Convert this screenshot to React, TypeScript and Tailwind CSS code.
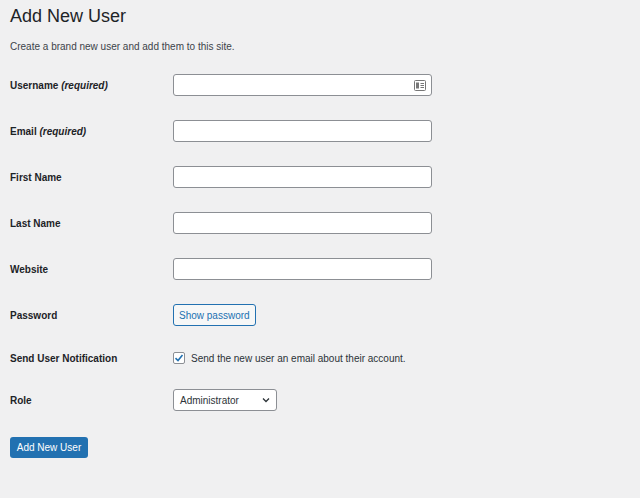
export default function App() {
  const font = { fontFamily: '"Liberation Sans", Arial, sans-serif' };
  const Input = ({ icon }: { icon?: boolean }) => (
    <div className="relative w-[259px] h-[22px] bg-white border border-[#8c8f94] rounded-[3px]">
      {icon && (
        <svg className="absolute right-[5px] top-[5px]" width="12" height="11" viewBox="0 0 12 11">
          <rect x="0.5" y="0.5" width="11" height="10" rx="1" fill="none" stroke="#777" />
          <rect x="2" y="2.5" width="3" height="6" fill="#777" />
          <rect x="6.5" y="3" width="3.5" height="1" fill="#777" />
          <rect x="6.5" y="5" width="3.5" height="1" fill="#777" />
          <rect x="6.5" y="7" width="3.5" height="1" fill="#777" />
        </svg>
      )}
    </div>
  );
  const Row = ({ label, req, h = "h-[46px]", children }: any) => (
    <div className={`flex items-center ${h}`}>
      <div className="w-[163px] text-[10px] font-bold text-[#1d2327]">
        {label}
        {req && <i> (required)</i>}
      </div>
      {children}
    </div>
  );
  return (
    <div className="w-[640px] h-[498px] bg-[#f0f0f1] px-[10px] text-[#1d2327]" style={font}>
      <div className="pt-[5px] text-[18px] leading-[22px]">Add New User</div>
      <div className="mt-[13px] text-[10px] leading-[14px] text-[#3c434a]">Create a brand new user and add them to this site.</div>
      <div className="mt-[8px]">
        <Row label="Username" req><Input icon /></Row>
        <Row label="Email" req><Input /></Row>
        <Row label="First Name"><Input /></Row>
        <Row label="Last Name"><Input /></Row>
        <Row label="Website"><Input /></Row>
        <Row label="Password">
          <div className="h-[22px] px-[5px] flex items-center border border-[#2271b1] rounded-[3px] bg-[#f6f7f7] text-[#2271b1] text-[10px]">Show password</div>
        </Row>
        <Row label="Send User Notification" h="h-[40px]">
          <div className="flex items-center gap-[6px] text-[10px] text-[#2c3338]">
            <div className="w-[12px] h-[12px] bg-white border border-[#8c8f94] rounded-[2px] flex items-center justify-center">
              <svg width="10" height="10" viewBox="0 0 10 10"><path d="M1.5 5.2 L4 7.5 L8.5 2" fill="none" stroke="#2271b1" strokeWidth="1.6" /></svg>
            </div>
            Send the new user an email about their account.
          </div>
        </Row>
        <Row label="Role" h="h-[44px]">
          <div className="w-[104px] h-[22px] bg-white border border-[#8c8f94] rounded-[3px] flex items-center justify-between pl-[6px] pr-[5px] text-[10px] text-[#2c3338]">
            Administrator
            <svg width="10" height="10" viewBox="0 0 10 10"><path d="M2 3.5 L5 6.5 L8 3.5" fill="none" stroke="#2c3338" strokeWidth="1.3" /></svg>
          </div>
        </Row>
      </div>
      <div className="mt-[15px] w-[78px] h-[21px] bg-[#2271b1] rounded-[3px] text-white text-[10px] flex items-center justify-center">Add New User</div>
    </div>
  );
}
